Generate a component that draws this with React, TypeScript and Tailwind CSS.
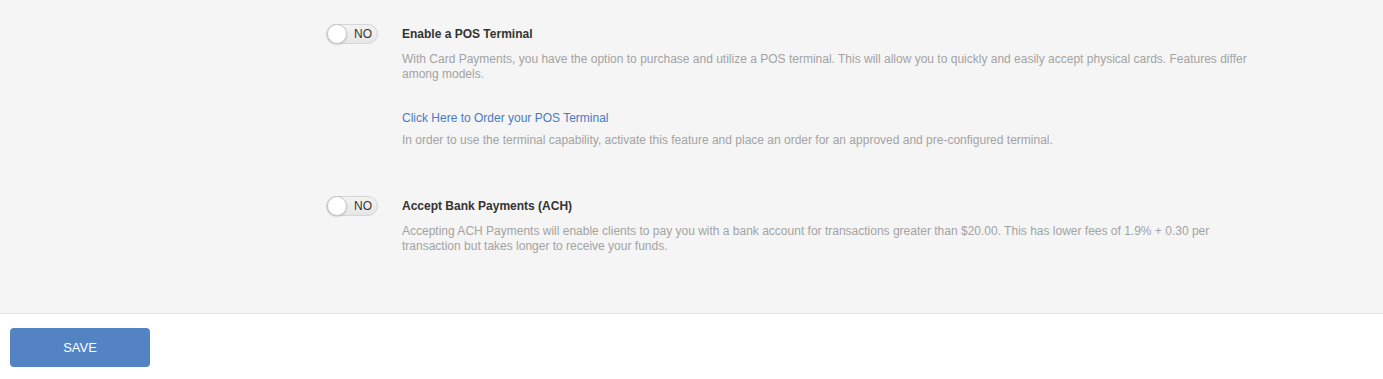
import React from 'react';

function Toggle() {
  return (
    <div className="relative flex h-5 w-[52px] shrink-0 items-center rounded-full border border-[#d6d6d6] bg-gradient-to-b from-[#f3f3f3] to-[#e6e6e6]">
      <span className="absolute left-0 top-[-1px] h-5 w-5 rounded-full border border-[#c8c8c8] bg-white shadow-[0_1px_2px_rgba(0,0,0,0.15)]" />
      <span className="ml-[27px] text-[12px] leading-none text-[#333]">NO</span>
    </div>
  );
}

function Setting({ title, children }: { title: string; children: React.ReactNode }) {
  return (
    <div className="flex gap-6">
      <div className="pt-[4px]">
        <Toggle />
      </div>
      <div className="w-[860px]">
        <h3 className="text-[12px] font-bold leading-[28px] text-[#333]">{title}</h3>
        {children}
      </div>
    </div>
  );
}

export default function App() {
  return (
    <div className="min-h-screen bg-white font-['Liberation_Sans',Arial,sans-serif]">
      <div className="border-b border-[#e4e4e4] bg-[#f5f5f5] pb-[59px] pl-[326px] pt-5">
        <Setting title="Enable a POS Terminal">
          <p className="mt-1 text-[12px] leading-[15px] text-[#a3a3a3]">
            With Card Payments, you have the option to purchase and utilize a POS terminal. This will allow you to quickly and easily accept physical cards. Features differ among models.
          </p>
          <a href="#" className="mt-[29px] block text-[12px] leading-[15px] text-[#4a7bc1]">
            Click Here to Order your POS Terminal
          </a>
          <p className="mt-[7px] text-[12px] leading-[15px] text-[#a3a3a3]">
            In order to use the terminal capability, activate this feature and place an order for an approved and pre-configured terminal.
          </p>
        </Setting>
        <div className="mt-[44px]">
          <Setting title="Accept Bank Payments (ACH)">
            <p className="mt-1 text-[12px] leading-[15px] text-[#a3a3a3]">
              Accepting ACH Payments will enable clients to pay you with a bank account for transactions greater than $20.00. This has lower fees of 1.9% + 0.30 per transaction but takes longer to receive your funds.
            </p>
          </Setting>
        </div>
      </div>
      <div className="px-[10px] pt-[14px]">
        <button className="h-[39px] w-[140px] rounded-[4px] bg-[#5383c3] text-[13px] text-white">SAVE</button>
      </div>
    </div>
  );
}
